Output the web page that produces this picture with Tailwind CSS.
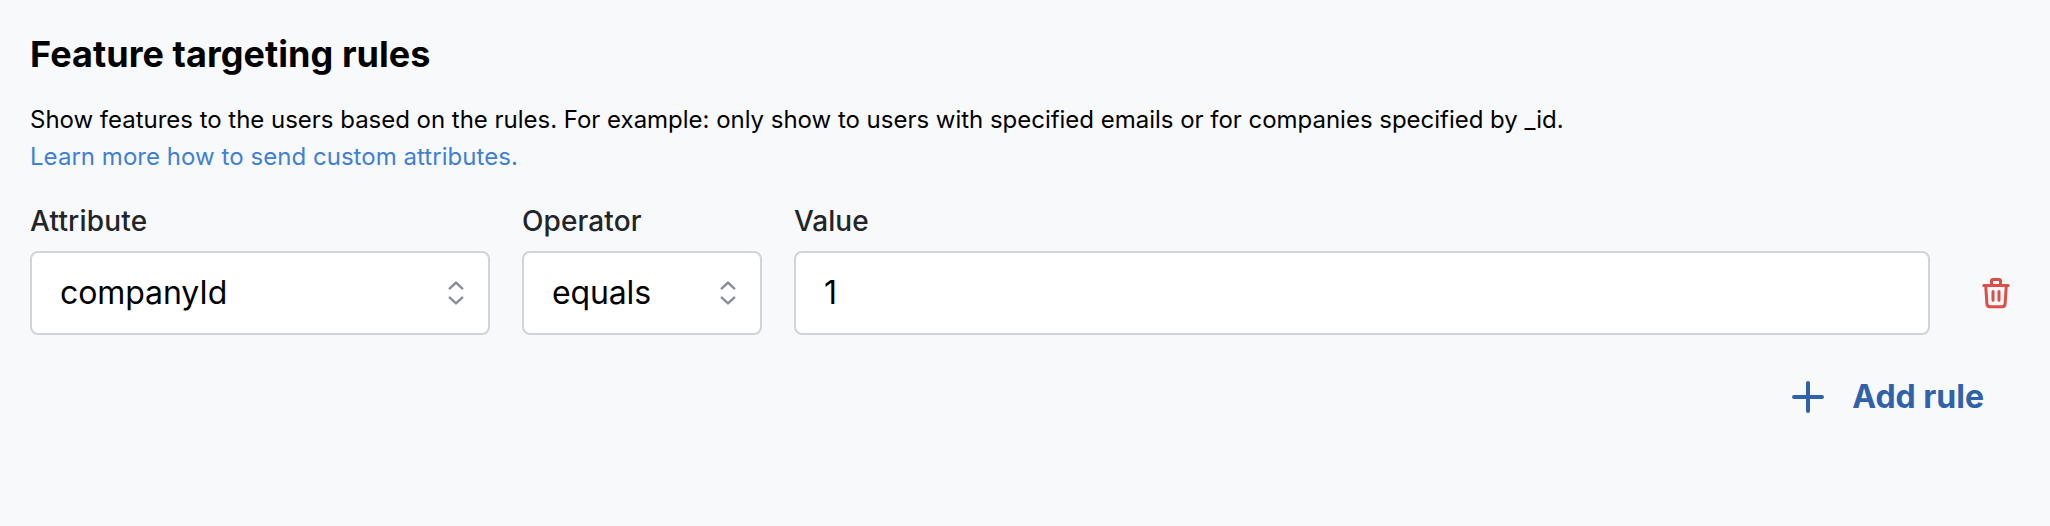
<!DOCTYPE html>
<html lang="en"><head><meta charset="utf-8"><title>Feature targeting rules</title>
<script src="https://cdn.jsdelivr.net/npm/@tailwindcss/browser@4"></script></head>
<body class="h-[526px] overflow-hidden bg-[#f8f9fb] px-[30px] pt-[29px] font-['Inter',sans-serif] text-black">
<h2 class="h-[50px] text-[36px] leading-[50px] font-bold tracking-[0.05px] whitespace-nowrap"><span>Feature targeting rules</span></h2>
<div class="mt-[22px] text-[24px] leading-[37px] tracking-[-0.02px] whitespace-nowrap"><p>Show features to the users based on the rules. For example: only show to users with specified emails or for companies specified by _id.</p><a class="block tracking-[0.04px] text-[#4080d6]">Learn more how to send custom attributes.</a></div>
<div class="mt-[25px] flex items-end">
<div class="w-[460px]"><label class="block h-[51px] text-[28px] leading-[42px] font-medium tracking-[0.2px] text-[#212529]">Attribute</label>
<div class="flex h-[84px] items-center justify-between rounded-lg border-2 border-[#ced4da] bg-white pl-[28px] pr-[20px] text-[32px] tracking-[-0.1px]"><span>companyId</span><svg class="h-6 w-6" viewBox="0 0 24 24" fill="none" stroke="#868e96" stroke-width="2.4" stroke-linecap="round" stroke-linejoin="round"><path d="M5.8 7.4L12 1.6l6.2 5.8M5.8 16.6l6.2 5.8 6.2-5.8"/></svg></div></div>
<div class="ml-8 w-[240px]"><label class="block h-[51px] text-[28px] leading-[42px] font-medium tracking-[0.1px] text-[#212529]">Operator</label>
<div class="flex h-[84px] items-center justify-between rounded-lg border-2 border-[#ced4da] bg-white pl-[28px] pr-[20px] text-[32px] tracking-[-0.15px]"><span>equals</span><svg class="h-6 w-6" viewBox="0 0 24 24" fill="none" stroke="#868e96" stroke-width="2.4" stroke-linecap="round" stroke-linejoin="round"><path d="M5.8 7.4L12 1.6l6.2 5.8M5.8 16.6l6.2 5.8 6.2-5.8"/></svg></div></div>
<div class="ml-8 w-[1136px]"><label class="block h-[51px] text-[28px] leading-[42px] font-medium text-[#212529]">Value</label>
<div class="flex h-[84px] items-center rounded-lg border-2 border-[#ced4da] bg-white pl-[28px] text-[32px]">1</div></div>
<div class="ml-[48px] flex h-[84px] items-center"><svg class="h-9 w-9" viewBox="0 0 36 36" fill="none" stroke="#dc4f47" stroke-width="3" stroke-linecap="round" stroke-linejoin="round"><path d="M5.8 10.4h24.4M13.5 10V6A1.5 1.5 0 0 1 15 4.5h6A1.5 1.5 0 0 1 22.5 6v4M7.7 10.5l1.2 18.4a3 3 0 0 0 3 2.8h12.2a3 3 0 0 0 3-2.8l1.2-18.4M15 16.5v8.7M21 16.5v8.7"/></svg></div>
</div>
<div class="mt-[36px] mr-[36px] flex h-[52px] items-center justify-end gap-[28px] text-[32px] font-bold text-[#2f62ab]"><svg class="h-8 w-8" viewBox="0 0 32 32" stroke="currentColor" stroke-width="4" stroke-linecap="round"><path d="M16 2v28M2 16h28"/></svg><span>Add rule</span></div>
</body></html>
